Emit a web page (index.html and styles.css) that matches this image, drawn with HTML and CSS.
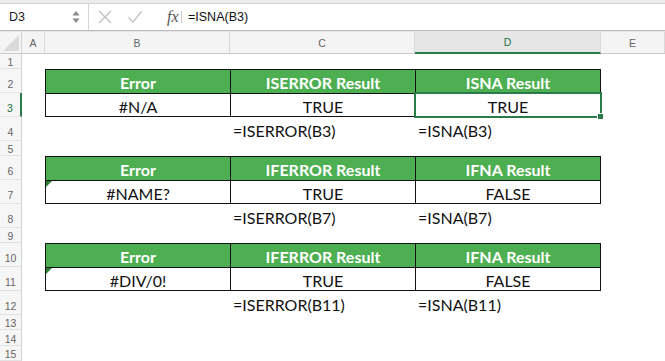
FILE: index.html
```html
<!DOCTYPE html>
<html>
<head>
<meta charset="utf-8">
<link rel="stylesheet" href="styles.css">
</head>
<body>
<div class="app">
  <div class="topstrip"></div>
  <div class="fbar">
    <div class="namebox">
      <span class="nb-text">D3</span>
      <svg class="nb-arrows" width="8" height="14" viewBox="0 0 8 14"><path d="M4 1 L7.5 5.5 L0.5 5.5 Z" fill="#8a8a8a"/><path d="M4 13 L7.5 8.5 L0.5 8.5 Z" fill="#8a8a8a"/></svg>
    </div>
    <div class="fb-icons">
      <svg class="ico" width="16" height="16" viewBox="0 0 16 16"><path d="M2 2 L14 14 M14 2 L2 14" stroke="#c2c2c2" stroke-width="1.4" fill="none"/></svg>
      <svg class="ico" width="16" height="16" viewBox="0 0 16 16"><path d="M1.5 8.5 L6 13 L14.5 2.5" stroke="#c2c2c2" stroke-width="1.4" fill="none"/></svg>
      <span class="fx">fx</span>
    </div>
    <div class="fb-sep"></div>
    <div class="fb-text">=ISNA(B3)</div>
  </div>
  <div class="fbar-gap"></div>

  <div class="sheet">
    <div class="row hdr">
      <div class="corner"><svg width="16" height="16" viewBox="0 0 16 16"><path d="M16 0 L16 16 L0 16 Z" fill="#dadada"/></svg></div>
      <div class="ch">A</div>
      <div class="ch">B</div>
      <div class="ch">C</div>
      <div class="ch ch-sel">D</div>
      <div class="ch">E</div>
    </div>

    <div class="row h15"><div class="rh">1</div><div></div><div></div><div></div><div></div><div></div></div>

    <div class="row h24"><div class="rh">2</div><div></div>
      <div class="c th first">Error</div><div class="c th">ISERROR Result</div><div class="c th last">ISNA Result</div><div></div></div>
    <div class="row h24"><div class="rh rh-sel">3</div><div></div>
      <div class="c td first">#N/A</div><div class="c td">TRUE</div><div class="c td last">TRUE<span class="sel"><span class="handle"></span></span></div><div></div></div>
    <div class="row h24"><div class="rh">4</div><div></div><div></div>
      <div class="c fm">=ISERROR(B3)</div><div class="c fm">=ISNA(B3)</div><div></div></div>

    <div class="row h15"><div class="rh">5</div><div></div><div></div><div></div><div></div><div></div></div>

    <div class="row h24"><div class="rh">6</div><div></div>
      <div class="c th first">Error</div><div class="c th">IFERROR Result</div><div class="c th last">IFNA Result</div><div></div></div>
    <div class="row h24"><div class="rh">7</div><div></div>
      <div class="c td first"><span class="tri"></span>#NAME?</div><div class="c td">TRUE</div><div class="c td last">FALSE</div><div></div></div>
    <div class="row h24"><div class="rh">8</div><div></div><div></div>
      <div class="c fm">=ISERROR(B7)</div><div class="c fm">=ISNA(B7)</div><div></div></div>

    <div class="row h15"><div class="rh">9</div><div></div><div></div><div></div><div></div><div></div></div>

    <div class="row h24"><div class="rh">10</div><div></div>
      <div class="c th first">Error</div><div class="c th">IFERROR Result</div><div class="c th last">IFNA Result</div><div></div></div>
    <div class="row h24"><div class="rh">11</div><div></div>
      <div class="c td first"><span class="tri"></span>#DIV/0!</div><div class="c td">TRUE</div><div class="c td last">FALSE</div><div></div></div>
    <div class="row h24"><div class="rh">12</div><div></div><div></div>
      <div class="c fm">=ISERROR(B11)</div><div class="c fm">=ISNA(B11)</div><div></div></div>

    <div class="row h15"><div class="rh">13</div><div></div><div></div><div></div><div></div><div></div></div>
    <div class="row h16"><div class="rh">14</div><div></div><div></div><div></div><div></div><div></div></div>
    <div class="row h15"><div class="rh">15</div><div></div><div></div><div></div><div></div><div></div></div>
  </div>
</div>
</body>
</html>
```

FILE: styles.css
```css
* { box-sizing: border-box; }
html, body { margin: 0; padding: 0; background: #fff; }
body { width: 665px; height: 361px; overflow: hidden; font-family: "Liberation Sans", Arial, sans-serif; }

.topstrip { height: 4px; background: #ececec; border-bottom: 1px solid #d2d2d2; }

.fbar { height: 26px; display: flex; align-items: center; background: #fff; }
.namebox { width: 89px; height: 26px; display: flex; align-items: center; justify-content: space-between; padding: 0 8px 0 9px; border-right: 1px solid #d6d6d6; }
.nb-text { font-size: 12.5px; color: #222; }
.nb-arrows { display: block; }
.fb-icons { width: 92px; display: flex; align-items: center; padding-left: 8px; }
.fb-icons .ico { margin-right: 14px; }
.fx { font-family: "Liberation Serif", serif; font-style: italic; font-size: 16px; color: #555; margin-left: 10px; }
.fb-sep { width: 1px; height: 12px; background: #cfcfcf; }
.fb-text { padding-left: 6px; font-size: 12.5px; color: #111; }

.fbar-gap { height: 2px; border-top: 1px solid #b9b9b9; background: #e6e6e6; }

.sheet { display: flex; flex-direction: column; }
.row { display: grid; grid-template-columns: 22px 23px 185px 185px 186px 64px; }
.h15 { height: 15px; }
.h16 { height: 16px; }
.h24 { height: 24px; }

.hdr { height: 22px; background: #f4f4f4; border-bottom: 1px solid #c9c9c9; }
.corner { display: flex; align-items: flex-end; justify-content: flex-end; padding: 0 2px 2px 0; border-right: 1px solid #d3d3d3; }
.corner svg { display: block; }
.ch { display: flex; align-items: center; justify-content: center; font-size: 10.5px; color: #666; border-right: 1px solid #dadada; }
.ch-sel { background: #e6e6e6; color: #1f7244; border-bottom: 2px solid #2a7a4a; margin-bottom: -1px; }

.rh { background: #f6f6f6; border-right: 1px solid #d3d3d3; border-bottom: 1px solid #e2e2e2; display: flex; align-items: flex-end; justify-content: center; font-size: 10.5px; color: #666; line-height: 12px; }
.h24 .rh { padding-bottom: 2px; }
.h15 .rh, .h16 .rh { padding-bottom: 0px; }
.rh-sel { color: #1f7244; border-right: 2px solid #2a7a4a; }

.c { position: relative; font-family: Lato, "Open Sans", sans-serif; font-size: 16px; color: #111; display: flex; align-items: center; }
.th, .td { justify-content: center; border-top: 1px solid #111; border-left: 1px solid #111; padding-top: 2px; }
.th { background: #4eaf52; color: #fff; font-weight: 700; }
.td { border-bottom: 1px solid #111; padding-top: 3px; }
.last { border-right: 1px solid #111; }
.fm { padding-left: 3px; padding-top: 3px; }

.tri { position: absolute; left: 0; top: 0; width: 0; height: 0; border-top: 6px solid #2b7d2f; border-right: 6px solid transparent; }

.sel { position: absolute; left: -2px; top: -2px; right: -2px; bottom: -2px; border: 2px solid #2a7a4a; }
.handle { position: absolute; right: -4px; bottom: -4px; width: 7px; height: 7px; background: #2a7a4a; border: 1px solid #fff; }
```
